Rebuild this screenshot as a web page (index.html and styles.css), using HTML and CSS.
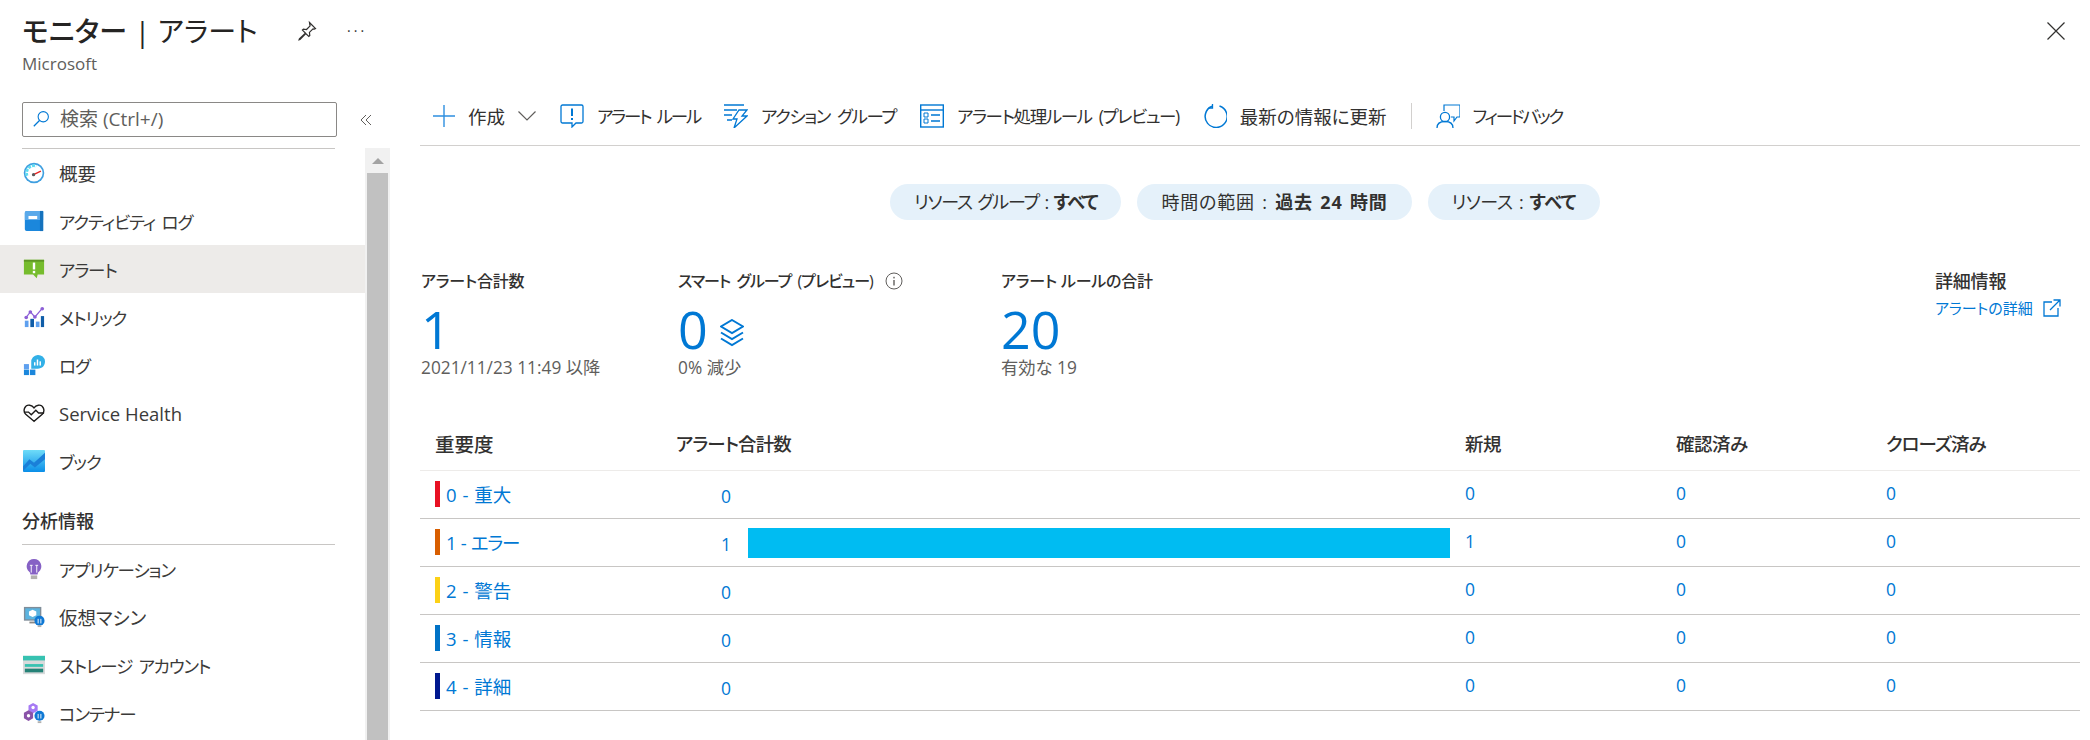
FILE: index.html
```html
<!DOCTYPE html>
<html lang="ja">
<head>
    <meta charset="UTF-8">
    <title>モニター | アラート</title>
    <link rel="stylesheet" href="styles.css">
</head>
<body>
    <header class="blade-header">
        <div class="blade-title">
            <div class="title-row">
                <h1><b>モニター</b> | アラート</h1>
                <svg class="pin" viewBox="0 0 22 22"><path d="M13.5 2.5l6 6-1.2.6-1.3-.3-3.6 3.6.4 3.1-1 1-3-3-5.8 6-.9.3.3-.9 6-5.8-3-3 1-1 3.1.4 3.6-3.6-.3-1.3z" fill="none" stroke="#323130" stroke-width="1.2"/></svg>
                <span class="more">···</span>
            </div>
            <div class="subtitle">Microsoft</div>
        </div>
        <svg class="close" viewBox="0 0 18 18"><path d="M0.5 0.5l17 17M17.5 0.5l-17 17" stroke="#323130" stroke-width="1.2"/></svg>
    </header>

    <div class="blade-body">
        <aside class="sidebar">
            <div class="search-row">
                <div class="search">
                    <svg viewBox="0 0 20 20"><circle cx="12.5" cy="7.5" r="5.7" fill="none" stroke="#0078d4" stroke-width="1.2"/><path d="M8.3 11.7L2 18" stroke="#0078d4" stroke-width="1.4"/></svg>
                    <span>検索 (Ctrl+/)</span>
                </div>
                <svg class="collapse" viewBox="0 0 12 12"><path d="M6 1L1 6l5 5M11 1L6 6l5 5" fill="none" stroke="#605e5c" stroke-width="1"/></svg>
            </div>
            <div class="nav-wrap">
                <nav class="nav">
                    <a class="nav-item plain">
                        <svg viewBox="0 0 24 24"><circle cx="12" cy="12" r="11.2" fill="#3f9fe0"/><circle cx="12" cy="12" r="9.4" fill="#fff"/><path d="M4.500 15a8 8 0 0 1 10-10.500" fill="none" stroke="#5fdcf0" stroke-width="3" stroke-dasharray="3.200 1.200"/><path d="M12 13.500l7.500-3.500" stroke="#e62323" stroke-width="1.500"/><circle cx="11.500" cy="13.800" r="1.800" fill="#59595b"/></svg>
                        概要
                    </a>
                    <a class="nav-item">
                        <svg viewBox="0 0 24 24"><path d="M2 3a2 2 0 0 1 2-2h17a1 1 0 0 1 1 1v20a1 1 0 0 1-1 1H4a2 2 0 0 1-2-2z" fill="#1b87dc"/><path d="M2 3a2 2 0 0 1 2-2h17a1 1 0 0 1 1 1v9H2z" fill="#5aa9ea"/><path d="M18.500 1H22v22h-3.500z" fill="#1572bd"/><rect x="6" y="6.500" width="9.500" height="3.400" fill="#fff"/></svg>
                        アクティビティ ログ
                    </a>
                    <a class="nav-item active">
                        <svg viewBox="0 0 24 24"><path d="M1 2h22v16h-7l-1 4-4-4H1z" fill="#76bc2d"/><path d="M1 2h22v2H1z" fill="#5e9624"/><rect x="10.7" y="5" width="2.6" height="7.5" fill="#fff"/><rect x="10.7" y="14" width="2.6" height="2.6" fill="#fff"/></svg>
                        アラート
                    </a>
                    <a class="nav-item">
                        <svg viewBox="0 0 24 24"><rect x="2" y="16" width="4" height="7" fill="#5ea0ef"/><rect x="8" y="14" width="4" height="9" fill="#0f5da8"/><rect x="14" y="17" width="4" height="6" fill="#5ea0ef"/><rect x="19.5" y="11" width="3.5" height="12" fill="#0f5da8"/><path d="M3.5 12.5L8 6.5l5 5.5 8-9.5" fill="none" stroke="#8c5fd6" stroke-width="1.3"/><circle cx="3.5" cy="12.5" r="2" fill="#8c5fd6"/><circle cx="8" cy="6.5" r="2" fill="#8c5fd6"/><circle cx="13" cy="12" r="2" fill="#8c5fd6"/><circle cx="21" cy="3" r="2" fill="#8c5fd6"/></svg>
                        メトリック
                    </a>
                    <a class="nav-item">
                        <svg viewBox="0 0 24 24"><path d="M9 9a7.5 7.5 0 0 1 15-1c0 5-3 8-8 8H9z" fill="#32b0e7"/><rect x="12" y="9" width="1.6" height="3.6" fill="#fff"/><rect x="15" y="6" width="1.6" height="6.6" fill="#fff"/><rect x="18" y="8" width="1.6" height="4.6" fill="#fff"/><rect x="1" y="11" width="5.5" height="5.5" fill="#5ea0ef"/><rect x="1" y="17" width="5.5" height="6" fill="#1b87dc"/><rect x="7.5" y="17" width="6" height="6" fill="#1b87dc"/></svg>
                        ログ
                    </a>
                    <a class="nav-item plain">
                        <svg viewBox="0 0 24 24"><path d="M12 21L3 13.5C-1 9 2.5 2.5 7.5 3.5c2 .3 3.5 1.5 4.5 3 1-1.500 2.500-2.700 4.500-3 5-1 8.500 5.500 4.500 10z" fill="none" stroke="#1b1a19" stroke-width="1.5"/><path d="M1 11h5l3 3 5-5 3 3h6" fill="#fff" stroke="#1b1a19" stroke-width="1.5"/></svg>
                        Service Health
                    </a>
                    <a class="nav-item">
                        <svg viewBox="0 0 24 24"><defs><linearGradient id="bookfill" x1="0" y1="0" x2="0" y2="1"><stop offset="0" stop-color="#6fdcf8"/><stop offset="1" stop-color="#0a8ee8"/></linearGradient></defs><rect width="24" height="24" rx="1" fill="url(#bookfill)"/><path d="M0 18l7-8 5 4 12-11v7l-11 9-5-4-8 8z" fill="#1a7fd8"/></svg>
                        ブック
                    </a>
                    <div class="nav-heading">分析情報</div>
                    <a class="nav-item">
                        <svg viewBox="0 0 24 24"><path d="M12 1a8 8 0 0 1 5 14.200c-.800.800-1 1.800-1 2.800H8c0-1-.2-2-1-2.800A8 8 0 0 1 12 1z" fill="#8661c5"/><rect x="8.500" y="19" width="7" height="4" fill="#b3b1af"/><path d="M9 8v8M15 8v8M7.500 8h3M13.500 8h3" stroke="#fff" stroke-width="1"/></svg>
                        アプリケーション
                    </a>
                    <a class="nav-item plain">
                        <svg viewBox="0 0 24 24"><rect x="1" y="1" width="19" height="15" fill="#7f8d99"/><rect x="2.500" y="2.500" width="16" height="12" fill="#5bb4e0"/><path d="M10.500 4l4 2v4l-4 2-4-2V6z" fill="#fff"/><rect x="7" y="17" width="7" height="2" fill="#8a8886"/><circle cx="18" cy="16" r="5.500" fill="#0f78d4"/><path d="M16.500 14v5M19.500 14v5" stroke="#fff" stroke-width="1"/><rect x="16" y="21" width="4" height="2" fill="#b3b1af"/></svg>
                        仮想マシン
                    </a>
                    <a class="nav-item">
                        <svg viewBox="0 0 24 24"><rect y="2" width="24" height="20" fill="#d8dadb"/><rect y="2" width="24" height="5" fill="#37c2b1"/><rect x="2" y="11" width="20" height="3" fill="#37c2b1"/><rect x="2" y="16" width="20" height="4" fill="#258277"/></svg>
                        ストレージ アカウント
                    </a>
                    <a class="nav-item">
                        <svg viewBox="0 0 24 24"><path d="M11 1l5 2.800v5.800l-5 2.800-5-2.800V3.800z" fill="#a67af4"/><path d="M6 9l5 2.800v6l-5 2.800-5-2.800v-6z" fill="#8a53a8"/><circle cx="11" cy="6" r="1.800" fill="#fff"/><circle cx="6" cy="15" r="1.800" fill="#fff"/><circle cx="18" cy="15" r="5.500" fill="#0f78d4"/><path d="M16.500 13v5M19.500 13v5" stroke="#fff" stroke-width="1"/><rect x="16" y="21" width="4" height="2" fill="#b3b1af"/></svg>
                        コンテナー
                    </a>
                </nav>
                <div class="scrollbar">
                    <div class="scroll-btn"><span class="arrow"></span></div>
                    <div class="scroll-thumb"></div>
                </div>
            </div>
        </aside>

        <main class="content">
            <div class="toolbar">
                <a class="tool plain">
                    <svg class="ic-plus" viewBox="0 0 22 22"><path d="M11 0v22M0 11h22" stroke="#2e8fe0" stroke-width="1.400"/></svg>
                    作成
                    <svg class="ic-chevron" viewBox="0 0 18 10"><path d="M.5.500L9 9l8.500-8.500" fill="none" stroke="#605e5c" stroke-width="1.200"/></svg>
                </a>
                <a class="tool tool-tight">
                    <svg viewBox="0 0 24 24"><path d="M2.500 1h19A1.500 1.500 0 0 1 23 2.500v15a1.500 1.500 0 0 1-1.500 1.500H16l-4 4v-4H2.500A1.500 1.500 0 0 1 1 17.500v-15A1.500 1.500 0 0 1 2.500 1z" fill="none" stroke="#0078d4" stroke-width="1.300"/><rect x="11" y="4.500" width="2" height="7.500" fill="#0078d4"/><rect x="11" y="14" width="2" height="2" fill="#0078d4"/></svg>
                    アラート ルール
                </a>
                <a class="tool">
                    <svg viewBox="0 0 24 24"><path d="M0 1h20M0 6h13M0 11h8M3 16h5" stroke="#0078d4" stroke-width="1.300"/><path d="M15 6h8l-5 6h5L10 24l3-9H9z" fill="none" stroke="#0078d4" stroke-width="1.300"/></svg>
                    アクション グループ
                </a>
                <a class="tool">
                    <svg viewBox="0 0 24 24"><rect x=".7" y="1" width="22.600" height="22" fill="none" stroke="#0078d4" stroke-width="1.400"/><path d="M1 6h22" stroke="#0078d4" stroke-width="1.400"/><path d="M4 9h4v4H4zM4 15h4v4H4z" fill="none" stroke="#0078d4"/><path d="M11 11h9M11 17h9" stroke="#0078d4" stroke-width="1.300"/></svg>
                    アラート処理ルール (プレビュー)
                </a>
                <a class="tool plain">
                    <svg viewBox="0 0 24 24"><path d="M9 2.300A11 11 0 1 0 16.500 2" fill="none" stroke="#0078d4" stroke-width="1.500"/><path d="M9.500 0v4h-4" fill="none" stroke="#0078d4" stroke-width="1.300"/></svg>
                    最新の情報に更新
                </a>
                <span class="tool-sep"></span>
                <a class="tool tool-tight">
                    <svg viewBox="0 0 24 24"><path d="M8 7V1h16v12h-3l-3 4v-4h-3" fill="none" stroke="#0078d4" stroke-width="1.200"/><circle cx="9" cy="13" r="4.600" fill="#fff" stroke="#0078d4" stroke-width="1.300"/><path d="M1 24c0-4 3-6.500 8-6.500s8 2.500 8 6.500" fill="none" stroke="#0078d4" stroke-width="1.300"/></svg>
                    フィードバック
                </a>
            </div>

            <div class="pills">
                <span class="pill pill-tight">リソース グループ : <b>すべて</b></span>
                <span class="pill pill-wide">時間の範囲 : <b>過去 24 時間</b></span>
                <span class="pill">リソース : <b>すべて</b></span>
            </div>

            <section class="stats">
                <div class="stat">
                    <div class="stat-label">アラート合計数</div>
                    <div class="stat-value">1</div>
                    <div class="stat-note">2021/11/23 11:49 以降</div>
                </div>
                <div class="stat">
                    <div class="stat-label label-tight">スマート グループ (プレビュー)
                        <svg class="ic-info" viewBox="0 0 18 18"><circle cx="9" cy="9" r="8" fill="none" stroke="#605e5c"/><rect x="8.300" y="8" width="1.400" height="5.500" fill="#605e5c"/><rect x="8.300" y="4.800" width="1.400" height="1.600" fill="#605e5c"/></svg>
                    </div>
                    <div class="stat-value">0
                        <svg class="ic-layers" viewBox="0 0 24 28"><path d="M12 1l11 6.500L12 14 1 7.500z" fill="none" stroke="#0078d4" stroke-width="2"/><path d="M1 13.500L12 20l11-6.500M1 19.500L12 26l11-6.500" fill="none" stroke="#0078d4" stroke-width="2"/></svg>
                    </div>
                    <div class="stat-note">0% 減少</div>
                </div>
                <div class="stat">
                    <div class="stat-label">アラート ルールの合計</div>
                    <div class="stat-value">20</div>
                    <div class="stat-note">有効な 19</div>
                </div>
                <div class="stat-info">
                    <div class="stat-label">詳細情報</div>
                    <a class="info-link">アラートの詳細
                        <svg viewBox="0 0 18 18"><path d="M9 3H1v14h14V9" fill="none" stroke="#0078d4" stroke-width="1.300"/><path d="M7 11L17 1M10.500 1H17v6.500" fill="none" stroke="#0078d4" stroke-width="1.300"/></svg>
                    </a>
                </div>
            </section>

            <section class="severity-table">
                <div class="row row-head">
                    <div>重要度</div>
                    <div>アラート合計数</div>
                    <div>新規</div>
                    <div>確認済み</div>
                    <div>クローズ済み</div>
                </div>
                <div class="row">
                    <div class="sev"><span class="sev-mark sev-0"></span>0 - 重大</div>
                    <div class="total"><span class="count">0</span></div>
                    <div>0</div><div>0</div><div>0</div>
                </div>
                <div class="row">
                    <div class="sev sev-tight"><span class="sev-mark sev-1"></span>1 - エラー</div>
                    <div class="total"><span class="count">1</span><span class="bar"></span></div>
                    <div>1</div><div>0</div><div>0</div>
                </div>
                <div class="row">
                    <div class="sev"><span class="sev-mark sev-2"></span>2 - 警告</div>
                    <div class="total"><span class="count">0</span></div>
                    <div>0</div><div>0</div><div>0</div>
                </div>
                <div class="row">
                    <div class="sev"><span class="sev-mark sev-3"></span>3 - 情報</div>
                    <div class="total"><span class="count">0</span></div>
                    <div>0</div><div>0</div><div>0</div>
                </div>
                <div class="row">
                    <div class="sev"><span class="sev-mark sev-4"></span>4 - 詳細</div>
                    <div class="total"><span class="count">0</span></div>
                    <div>0</div><div>0</div><div>0</div>
                </div>
            </section>
        </main>
    </div>
</body>
</html>
```

FILE: styles.css
```css
* {
    box-sizing: border-box;
}
html, body {
    height: 100%;
}
body {
    margin: 0;
    overflow: hidden;
    background: #fff;
    color: #323130;
    font-family: "Open Sans", "Noto Sans CJK JP", sans-serif;
    font-size: 17.5px;
    font-feature-settings: "palt";
}
a {
    color: inherit;
    text-decoration: none;
}

/* header */
.blade-header {
    display: flex;
    justify-content: space-between;
    height: 78px;
    padding: 13px 25px 0 22px;
}
.title-row {
    display: flex;
    align-items: center;
    height: 36px;
}
h1 {
    margin: 0;
    font-size: 28px;
    font-weight: 400;
    line-height: 36px;
    color: #252423;
    letter-spacing: 0.2px;
    white-space: nowrap;
}
h1 b {
    font-weight: 500;
}
.pin {
    width: 22px;
    height: 22px;
    margin-left: 38px;
}
.more {
    margin-left: 29px;
    font-size: 14px;
    line-height: 14px;
    letter-spacing: 3px;
}
.subtitle {
    margin-top: 4px;
    font-size: 17px;
    line-height: 22px;
    color: #605e5c;
}
.close {
    width: 18px;
    height: 18px;
    margin-top: 9px;
}

/* sidebar */
.blade-body {
    display: grid;
    grid-template-columns: 420px 1fr;
    height: 662px;
}
.sidebar {
    display: flex;
    flex-direction: column;
    min-height: 0;
}
.search-row {
    display: flex;
    align-items: center;
    padding: 24px 0 0 22px;
}
.search {
    display: flex;
    align-items: center;
    gap: 10px;
    width: 315px;
    height: 35px;
    padding: 0 0 2px 9px;
    border: 1px solid #8a8886;
    border-radius: 2px;
    color: #605e5c;
    font-size: 19px;
    line-height: 20px;
}
.search svg {
    width: 18px;
    height: 20px;
}
.collapse {
    width: 12px;
    height: 12px;
    margin-left: 23px;
}
.nav-wrap {
    display: flex;
    flex: 1;
    min-height: 0;
    margin-top: 11px;
}
.nav {
    width: 365px;
    overflow: hidden;
}
.nav::before {
    content: "";
    display: block;
    height: 1px;
    margin: 0 30px 0 22px;
    background: #c8c6c4;
}
.nav-item {
    display: flex;
    align-items: center;
    gap: 14px;
    height: 48px;
    padding-left: 23px;
    white-space: nowrap;
    color: #3b3a39;
    letter-spacing: -1.1px;
    word-spacing: 3px;
}
.nav-item.plain {
    font-size: 18.5px;
    letter-spacing: 0;
    word-spacing: 0;
}
.nav-item svg {
    width: 22px;
    height: 22px;
    flex: none;
}
.nav-item.active {
    background: #edebe9;
}
.nav-heading {
    height: 39px;
    margin: 21px 30px 0 22px;
    padding-top: 3px;
    border-bottom: 1px solid #c8c6c4;
    font-size: 18px;
    line-height: 24px;
    font-weight: 500;
}
.scrollbar {
    width: 25px;
    background: #f1f1f1;
}
.scroll-btn {
    display: flex;
    justify-content: center;
    align-items: center;
    height: 25px;
}
.arrow {
    border-left: 6px solid transparent;
    border-right: 6px solid transparent;
    border-bottom: 6px solid #a3a3a3;
}
.scroll-thumb {
    width: 21px;
    height: 100%;
    margin-left: 2px;
    background: #c1c1c1;
}

/* toolbar */
.content {
    min-width: 0;
    padding-right: 10px;
}
.toolbar {
    display: flex;
    align-items: center;
    gap: 24px;
    height: 68px;
    padding: 8px 0 0 13px;
    border-bottom: 1px solid #d2d0ce;
    white-space: nowrap;
}
.tool {
    display: flex;
    align-items: center;
    gap: 13px;
    color: #323130;
    letter-spacing: -1.4px;
    word-spacing: 4px;
}
.tool.plain {
    font-size: 18.5px;
    letter-spacing: 0;
    word-spacing: 0;
}
.tool.tool-tight {
    letter-spacing: -2.2px;
}
.tool svg {
    width: 24px;
    height: 24px;
}
.tool .ic-plus {
    width: 22px;
    height: 22px;
}
.tool .ic-chevron {
    width: 18px;
    height: 10px;
}
.tool-sep {
    width: 1px;
    height: 26px;
    background: #d2d0ce;
}
.pills {
    display: flex;
    justify-content: center;
    gap: 16px;
    margin-top: 38px;
    padding-right: 10px;
}
.pill {
    padding: 0 24px;
    height: 36px;
    border-radius: 18px;
    background: #e5f1fa;
    font-size: 18px;
    line-height: 36px;
    white-space: nowrap;
    letter-spacing: -0.4px;
    word-spacing: 2px;
}
.pill-tight {
    letter-spacing: -1.2px;
}
.pill-wide {
    letter-spacing: 0.8px;
}
.pill b {
    font-weight: 700;
}

/* stats */
.stats {
    display: grid;
    grid-template-columns: 257px 323px 1fr 145px;
    margin-top: 49px;
    padding-left: 1px;
}
.stat-label {
    display: flex;
    align-items: center;
    gap: 12px;
    font-size: 16px;
    line-height: 24px;
    font-weight: 500;
    letter-spacing: -0.2px;
    white-space: nowrap;
}
.stat-label.label-tight {
    letter-spacing: -1px;
    word-spacing: 3px;
}
.stat-info .stat-label {
    font-size: 18px;
}
.stat-value {
    display: flex;
    align-items: center;
    gap: 12px;
    height: 56px;
    margin-top: 8px;
    font-size: 52px;
    line-height: 52px;
    color: #0078d4;
}
.stat-note {
    font-size: 17.3px;
    line-height: 22px;
    color: #605e5c;
    white-space: nowrap;
}
.ic-info {
    width: 18px;
    height: 18px;
}
.ic-layers {
    width: 24px;
    height: 28px;
    margin-top: 8px;
}
.info-link {
    display: flex;
    align-items: center;
    gap: 10px;
    margin-top: 3px;
    font-size: 15px;
    line-height: 24px;
    color: #0078d4;
    white-space: nowrap;
}
.info-link svg {
    width: 18px;
    height: 18px;
}

/* table */
.severity-table {
    margin-top: 44px;
}
.row {
    display: grid;
    grid-template-columns: 241px 789px 211px 210px 1fr;
    align-items: center;
    height: 48px;
    padding-left: 15px;
    border-bottom: 1px solid #c8c6c4;
    color: #0078d4;
}
.row > div:nth-child(n+3) {
    margin-bottom: 4px;
}
.row-head {
    padding-bottom: 7px;
    border-bottom-color: #edebe9;
    color: #323130;
    font-size: 18.5px;
    font-weight: 500;
    letter-spacing: -0.5px;
}
.row-head > div:first-child {
    font-size: 19.5px;
    letter-spacing: 0;
}
.row-head > div:nth-child(2) {
    letter-spacing: -0.9px;
}
.row-head > div:last-child {
    letter-spacing: -1px;
}
.row-head > div:nth-child(n+3) {
    margin-bottom: 0;
}
.sev {
    display: flex;
    align-items: center;
    gap: 6px;
    padding-bottom: 1px;
    font-size: 18.5px;
    word-spacing: 1px;
}
.sev-mark {
    width: 5px;
    height: 26px;
}
.sev-tight {
    letter-spacing: -1.3px;
    word-spacing: 2px;
}
.sev-0 { background: #e81123; }
.sev-1 { background: #d85e00; }
.sev-2 { background: #fcd116; }
.sev-3 { background: #0072c6; }
.sev-4 { background: #00188f; }
.total {
    display: flex;
    align-items: center;
}
.count {
    width: 55px;
    margin: 2px 17px 0 0;
    text-align: right;
}
.bar {
    width: 702px;
    height: 30px;
    background: #00bcf2;
}
```
